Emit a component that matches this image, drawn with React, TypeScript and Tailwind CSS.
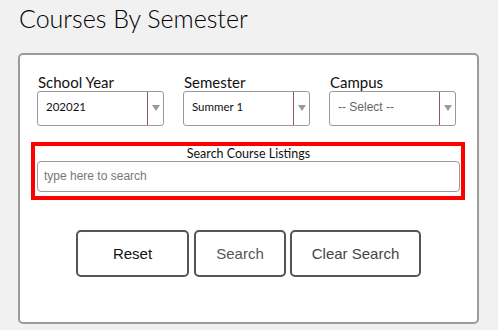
import React from "react";

function SelectBox({ value, placeholder }: { value?: string; placeholder?: string }) {
  return (
    <div className="flex h-[35px] w-[127px] rounded-[3px] border border-[#9a9a9a] bg-white">
      <div className="flex flex-1 items-center pl-[8px] pb-[4px]">
        {value ? (
          <span className="text-[11.5px] text-[#111] font-['Lato',sans-serif]">{value}</span>
        ) : (
          <span className="text-[12px] text-[#666] font-['Liberation_Sans',Arial,sans-serif]">{placeholder}</span>
        )}
      </div>
      <div className="flex w-[16px] items-center justify-center border-l border-[#8e5577] pb-[1px]">
        <svg width="8" height="6" viewBox="0 0 8 6">
          <polygon points="0,0 8,0 4,6" fill="#9a9a9a" />
        </svg>
      </div>
    </div>
  );
}

function Field({ label, value, placeholder }: { label: string; value?: string; placeholder?: string }) {
  return (
    <div className="flex flex-col">
      <div className="pl-[1px] text-[15px] leading-[17px] text-[#111] font-['Lato',sans-serif]">{label}</div>
      <SelectBox value={value} placeholder={placeholder} />
    </div>
  );
}

export default function App() {
  return (
    <div className="h-[330px] w-[498px] overflow-hidden bg-[#f1f1f1]">
      <h1 className="pl-[19px] pt-[3px] text-[25px] font-light leading-[30px] text-[#000] font-['Lato',sans-serif]">
        Courses By Semester
      </h1>
      <div className="ml-[18px] mt-[20px] h-[271px] w-[461px] rounded-[5px] border-2 border-[#9b9b9b] bg-white">
        <div className="ml-[17px] mt-[19px] flex gap-[19px]">
          <Field label="School Year" value="202021" />
          <Field label="Semester" value="Summer 1" />
          <Field label="Campus" placeholder="-- Select --" />
        </div>
        <div className="ml-[11px] mt-[16px] flex h-[58px] w-[434px] flex-col border-4 border-[#ff0000] pl-[2px] pr-[1px]">
          <div className="text-center text-[12.5px] leading-[15px] text-[#111] font-['Lato',sans-serif]">
            Search Course Listings
          </div>
          <input
            className="h-[31px] w-full rounded-[4px] border border-[#9a9a9a] pl-[6px] pb-[2px] text-[12px] outline-none placeholder:text-[#777] font-['Liberation_Sans',Arial,sans-serif]"
            placeholder="type here to search"
          />
        </div>
        <div className="ml-[56px] mt-[30px] flex">
          <button className="h-[47px] w-[113px] rounded-[5px] border-2 border-[#555] bg-white pt-[2px] text-[15px] font-normal text-[#111] font-['Liberation_Sans',Arial,sans-serif]">
            Reset
          </button>
          <button className="ml-[5px] h-[47px] w-[92px] rounded-[5px] border-2 border-[#555] bg-white pt-[2px] text-[15px] font-normal text-[#555] font-['Liberation_Sans',Arial,sans-serif]">
            Search
          </button>
          <button className="ml-[4px] h-[47px] w-[131px] rounded-[5px] border-2 border-[#555] bg-white pt-[2px] text-[15px] font-normal text-[#444] font-['Liberation_Sans',Arial,sans-serif]">
            Clear Search
          </button>
        </div>
      </div>
    </div>
  );
}
